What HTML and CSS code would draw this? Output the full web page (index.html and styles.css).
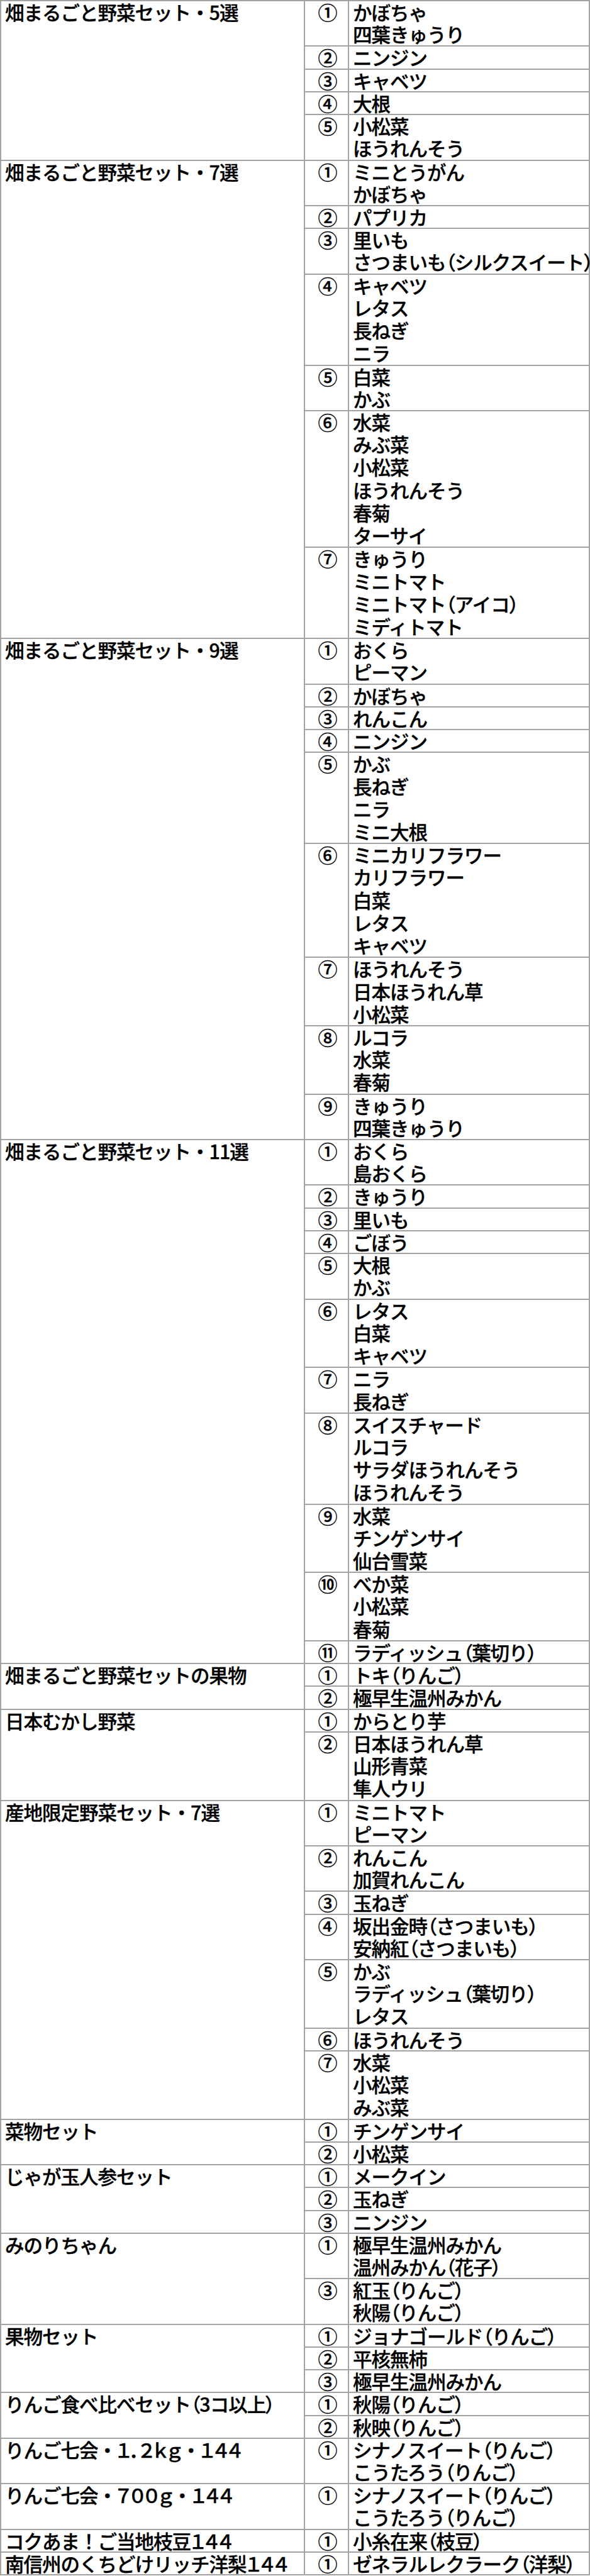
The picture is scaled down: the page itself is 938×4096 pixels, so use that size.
FILE: index.html
```html
<!DOCTYPE html>
<html lang="ja">
<head>
<meta charset="utf-8">
<title>野菜セット内容一覧</title>
<link rel="stylesheet" href="styles.css">
</head>
<body>
<div class="sheet">

  <div class="group">
    <div class="name">畑まるごと野菜セット・5選</div>
    <div class="rows">
      <div class="row"><div class="num">①</div><div class="items"><div class="line">かぼちゃ</div><div class="line">四葉きゅうり</div></div></div>
      <div class="row"><div class="num">②</div><div class="items"><div class="line">ニンジン</div></div></div>
      <div class="row"><div class="num">③</div><div class="items"><div class="line">キャベツ</div></div></div>
      <div class="row"><div class="num">④</div><div class="items"><div class="line">大根</div></div></div>
      <div class="row"><div class="num">⑤</div><div class="items"><div class="line">小松菜</div><div class="line">ほうれんそう</div></div></div>
    </div>
  </div>

  <div class="group">
    <div class="name">畑まるごと野菜セット・7選</div>
    <div class="rows">
      <div class="row"><div class="num">①</div><div class="items"><div class="line">ミニとうがん</div><div class="line">かぼちゃ</div></div></div>
      <div class="row"><div class="num">②</div><div class="items"><div class="line">パプリカ</div></div></div>
      <div class="row"><div class="num">③</div><div class="items"><div class="line">里いも</div><div class="line">さつまいも<span class="pa">（</span>シルクスイート<span class="pa">）</span></div></div></div>
      <div class="row"><div class="num">④</div><div class="items"><div class="line">キャベツ</div><div class="line">レタス</div><div class="line">長ねぎ</div><div class="line">ニラ</div></div></div>
      <div class="row"><div class="num">⑤</div><div class="items"><div class="line">白菜</div><div class="line">かぶ</div></div></div>
      <div class="row"><div class="num">⑥</div><div class="items"><div class="line">水菜</div><div class="line">みぶ菜</div><div class="line">小松菜</div><div class="line">ほうれんそう</div><div class="line">春菊</div><div class="line">ターサイ</div></div></div>
      <div class="row"><div class="num">⑦</div><div class="items"><div class="line">きゅうり</div><div class="line">ミニトマト</div><div class="line">ミニトマト<span class="pa">（</span>アイコ<span class="pa">）</span></div><div class="line">ミディトマト</div></div></div>
    </div>
  </div>

  <div class="group">
    <div class="name">畑まるごと野菜セット・9選</div>
    <div class="rows">
      <div class="row"><div class="num">①</div><div class="items"><div class="line">おくら</div><div class="line">ピーマン</div></div></div>
      <div class="row"><div class="num">②</div><div class="items"><div class="line">かぼちゃ</div></div></div>
      <div class="row"><div class="num">③</div><div class="items"><div class="line">れんこん</div></div></div>
      <div class="row"><div class="num">④</div><div class="items"><div class="line">ニンジン</div></div></div>
      <div class="row"><div class="num">⑤</div><div class="items"><div class="line">かぶ</div><div class="line">長ねぎ</div><div class="line">ニラ</div><div class="line">ミニ大根</div></div></div>
      <div class="row"><div class="num">⑥</div><div class="items"><div class="line">ミニカリフラワー</div><div class="line">カリフラワー</div><div class="line">白菜</div><div class="line">レタス</div><div class="line">キャベツ</div></div></div>
      <div class="row"><div class="num">⑦</div><div class="items"><div class="line">ほうれんそう</div><div class="line">日本ほうれん草</div><div class="line">小松菜</div></div></div>
      <div class="row"><div class="num">⑧</div><div class="items"><div class="line">ルコラ</div><div class="line">水菜</div><div class="line">春菊</div></div></div>
      <div class="row"><div class="num">⑨</div><div class="items"><div class="line">きゅうり</div><div class="line">四葉きゅうり</div></div></div>
    </div>
  </div>

  <div class="group">
    <div class="name">畑まるごと野菜セット・11選</div>
    <div class="rows">
      <div class="row"><div class="num">①</div><div class="items"><div class="line">おくら</div><div class="line">島おくら</div></div></div>
      <div class="row"><div class="num">②</div><div class="items"><div class="line">きゅうり</div></div></div>
      <div class="row"><div class="num">③</div><div class="items"><div class="line">里いも</div></div></div>
      <div class="row"><div class="num">④</div><div class="items"><div class="line">ごぼう</div></div></div>
      <div class="row"><div class="num">⑤</div><div class="items"><div class="line">大根</div><div class="line">かぶ</div></div></div>
      <div class="row"><div class="num">⑥</div><div class="items"><div class="line">レタス</div><div class="line">白菜</div><div class="line">キャベツ</div></div></div>
      <div class="row"><div class="num">⑦</div><div class="items"><div class="line">ニラ</div><div class="line">長ねぎ</div></div></div>
      <div class="row"><div class="num">⑧</div><div class="items"><div class="line">スイスチャード</div><div class="line">ルコラ</div><div class="line">サラダほうれんそう</div><div class="line">ほうれんそう</div></div></div>
      <div class="row"><div class="num">⑨</div><div class="items"><div class="line">水菜</div><div class="line">チンゲンサイ</div><div class="line">仙台雪菜</div></div></div>
      <div class="row"><div class="num">⑩</div><div class="items"><div class="line">べか菜</div><div class="line">小松菜</div><div class="line">春菊</div></div></div>
      <div class="row"><div class="num">⑪</div><div class="items"><div class="line">ラディッシュ<span class="pa">（</span>葉切り<span class="pa">）</span></div></div></div>
    </div>
  </div>

  <div class="group">
    <div class="name">畑まるごと野菜セットの果物</div>
    <div class="rows">
      <div class="row"><div class="num">①</div><div class="items"><div class="line">トキ<span class="pa">（</span>りんご<span class="pa">）</span></div></div></div>
      <div class="row"><div class="num">②</div><div class="items"><div class="line">極早生温州みかん</div></div></div>
    </div>
  </div>

  <div class="group">
    <div class="name">日本むかし野菜</div>
    <div class="rows">
      <div class="row"><div class="num">①</div><div class="items"><div class="line">からとり芋</div></div></div>
      <div class="row"><div class="num">②</div><div class="items"><div class="line">日本ほうれん草</div><div class="line">山形青菜</div><div class="line">隼人ウリ</div></div></div>
    </div>
  </div>

  <div class="group">
    <div class="name">産地限定野菜セット・7選</div>
    <div class="rows">
      <div class="row"><div class="num">①</div><div class="items"><div class="line">ミニトマト</div><div class="line">ピーマン</div></div></div>
      <div class="row"><div class="num">②</div><div class="items"><div class="line">れんこん</div><div class="line">加賀れんこん</div></div></div>
      <div class="row"><div class="num">③</div><div class="items"><div class="line">玉ねぎ</div></div></div>
      <div class="row"><div class="num">④</div><div class="items"><div class="line">坂出金時<span class="pa">（</span>さつまいも<span class="pa">）</span></div><div class="line">安納紅<span class="pa">（</span>さつまいも<span class="pa">）</span></div></div></div>
      <div class="row"><div class="num">⑤</div><div class="items"><div class="line">かぶ</div><div class="line">ラディッシュ<span class="pa">（</span>葉切り<span class="pa">）</span></div><div class="line">レタス</div></div></div>
      <div class="row"><div class="num">⑥</div><div class="items"><div class="line">ほうれんそう</div></div></div>
      <div class="row"><div class="num">⑦</div><div class="items"><div class="line">水菜</div><div class="line">小松菜</div><div class="line">みぶ菜</div></div></div>
    </div>
  </div>

  <div class="group">
    <div class="name">菜物セット</div>
    <div class="rows">
      <div class="row"><div class="num">①</div><div class="items"><div class="line">チンゲンサイ</div></div></div>
      <div class="row"><div class="num">②</div><div class="items"><div class="line">小松菜</div></div></div>
    </div>
  </div>

  <div class="group">
    <div class="name">じゃが玉人参セット</div>
    <div class="rows">
      <div class="row"><div class="num">①</div><div class="items"><div class="line">メークイン</div></div></div>
      <div class="row"><div class="num">②</div><div class="items"><div class="line">玉ねぎ</div></div></div>
      <div class="row"><div class="num">③</div><div class="items"><div class="line">ニンジン</div></div></div>
    </div>
  </div>

  <div class="group">
    <div class="name">みのりちゃん</div>
    <div class="rows">
      <div class="row"><div class="num">①</div><div class="items"><div class="line">極早生温州みかん</div><div class="line">温州みかん<span class="pa">（</span>花子<span class="pa">）</span></div></div></div>
      <div class="row"><div class="num">③</div><div class="items"><div class="line">紅玉<span class="pa">（</span>りんご<span class="pa">）</span></div><div class="line">秋陽<span class="pa">（</span>りんご<span class="pa">）</span></div></div></div>
    </div>
  </div>

  <div class="group">
    <div class="name">果物セット</div>
    <div class="rows">
      <div class="row"><div class="num">①</div><div class="items"><div class="line">ジョナゴールド<span class="pa">（</span>りんご<span class="pa">）</span></div></div></div>
      <div class="row"><div class="num">②</div><div class="items"><div class="line">平核無柿</div></div></div>
      <div class="row"><div class="num">③</div><div class="items"><div class="line">極早生温州みかん</div></div></div>
    </div>
  </div>

  <div class="group">
    <div class="name">りんご食べ比べセット<span class="pa">（</span>3コ以上<span class="pa">）</span></div>
    <div class="rows">
      <div class="row"><div class="num">①</div><div class="items"><div class="line">秋陽<span class="pa">（</span>りんご<span class="pa">）</span></div></div></div>
      <div class="row"><div class="num">②</div><div class="items"><div class="line">秋映<span class="pa">（</span>りんご<span class="pa">）</span></div></div></div>
    </div>
  </div>

  <div class="group">
    <div class="name">りんご七会・<span class="pa">１．２ｋｇ</span>・<span class="pa">１４４</span></div>
    <div class="rows">
      <div class="row"><div class="num">①</div><div class="items"><div class="line">シナノスイート<span class="pa">（</span>りんご<span class="pa">）</span></div><div class="line">こうたろう<span class="pa">（</span>りんご<span class="pa">）</span></div></div></div>
    </div>
  </div>

  <div class="group">
    <div class="name">りんご七会・<span class="pa">７００ｇ</span>・<span class="pa">１４４</span></div>
    <div class="rows">
      <div class="row"><div class="num">①</div><div class="items"><div class="line">シナノスイート<span class="pa">（</span>りんご<span class="pa">）</span></div><div class="line">こうたろう<span class="pa">（</span>りんご<span class="pa">）</span></div></div></div>
    </div>
  </div>

  <div class="group">
    <div class="name">コクあま！ご当地枝豆<span class="pa">１４４</span></div>
    <div class="rows">
      <div class="row"><div class="num">①</div><div class="items"><div class="line">小糸在来<span class="pa">（</span>枝豆<span class="pa">）</span></div></div></div>
    </div>
  </div>

  <div class="group">
    <div class="name">南信州のくちどけリッチ洋梨<span class="pa">１４４</span></div>
    <div class="rows">
      <div class="row"><div class="num">①</div><div class="items"><div class="line">ゼネラルレクラーク<span class="pa">（</span>洋梨<span class="pa">）</span></div></div></div>
    </div>
  </div>

</div>
</body>
</html>
```
FILE: styles.css
```css
html, body {
  margin: 0;
  padding: 0;
  background: #ffffff;
}

.sheet {
  width: 938px;
  box-sizing: border-box;
  border-left: 2px solid #a3a3a3;
  border-right: 2px solid #a3a3a3;
  border-bottom: 2px solid #a3a3a3;
  font-family: "Noto Sans CJK JP", "Noto Sans", sans-serif;
  font-size: 30.5px;
  font-weight: 500;
  letter-spacing: -1px;
  color: #000000;
  -webkit-text-stroke: 0.35px #000000;
}

.group {
  display: flex;
  border-top: 2px solid #a3a3a3;
}

.name {
  flex: none;
  width: 483px;
  box-sizing: border-box;
  border-right: 2px solid #a3a3a3;
  padding-left: 6px;
  line-height: 34.23px;
  white-space: nowrap;
}

.rows {
  flex: 1;
  display: flex;
  flex-direction: column;
}

.row {
  display: flex;
  border-top: 2px solid #a3a3a3;
}

.row:first-child {
  border-top: none;
}

.num {
  flex: none;
  width: 70px;
  box-sizing: border-box;
  border-right: 2px solid #a3a3a3;
  padding-left: 4px;
  text-align: center;
  font-size: 31px;
  line-height: 34.23px;
  letter-spacing: 0;
}

.items {
  flex: 1;
  padding-left: 6px;
}

.line {
  height: 36.23px;
  line-height: 36.23px;
  white-space: nowrap;
}

.line:first-child {
  height: 34.23px;
  line-height: 34.23px;
}

.pa {
  font-feature-settings: "palt";
}
```
